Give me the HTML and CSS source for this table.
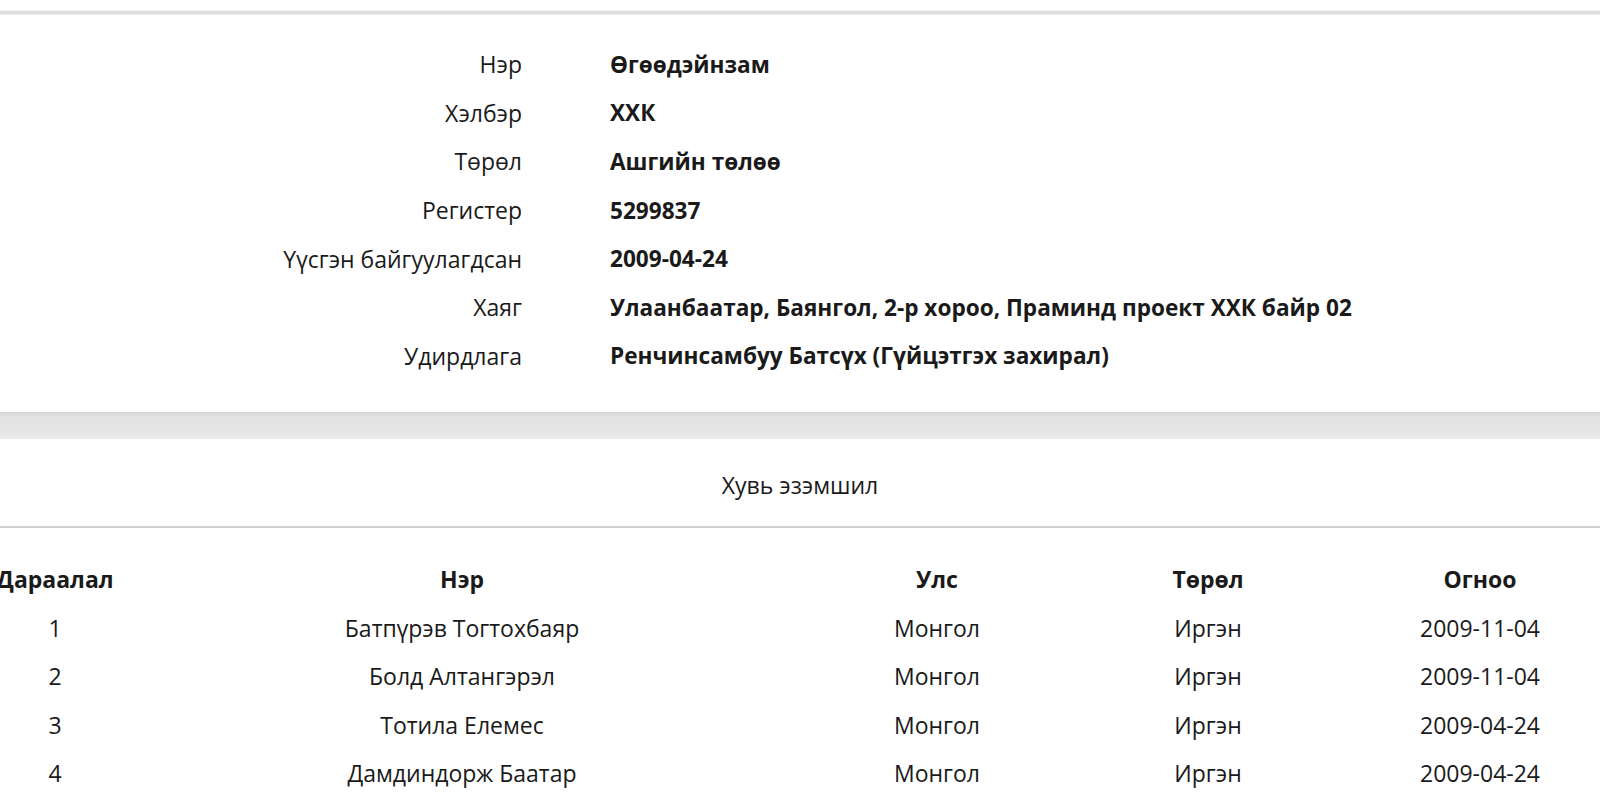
FILE: index.html
```html
<!DOCTYPE html>
<html lang="mn">
<head>
  <meta charset="UTF-8" />
  <title>Компанийн мэдээлэл</title>
  <link rel="stylesheet" href="styles.css">
</head>
<body>
  <div class="top-edge"></div>

  <section class="card info">
    <div class="info-row"><span class="label">Нэр</span><span class="value">Өгөөдэйнзам</span></div>
    <div class="info-row"><span class="label">Хэлбэр</span><span class="value">ХХК</span></div>
    <div class="info-row"><span class="label">Төрөл</span><span class="value">Ашгийн төлөө</span></div>
    <div class="info-row"><span class="label">Регистер</span><span class="value">5299837</span></div>
    <div class="info-row"><span class="label">Үүсгэн байгуулагдсан</span><span class="value">2009-04-24</span></div>
    <div class="info-row"><span class="label">Хаяг</span><span class="value">Улаанбаатар, Баянгол, 2-р хороо, Праминд проект ХХК байр 02</span></div>
    <div class="info-row"><span class="label">Удирдлага</span><span class="value">Ренчинсамбуу Батсүх (Гүйцэтгэх захирал)</span></div>
  </section>

  <div class="band"></div>

  <section class="card owners">
    <h2 class="card-title">Хувь эзэмшил</h2>
    <div class="owners-table">
      <div class="tr th">
        <span>Дараалал</span><span>Нэр</span><span>Улс</span><span>Төрөл</span><span>Огноо</span>
      </div>
      <div class="tr">
        <span>1</span><span>Батпүрэв Тогтохбаяр</span><span>Монгол</span><span>Иргэн</span><span>2009-11-04</span>
      </div>
      <div class="tr">
        <span>2</span><span>Болд Алтангэрэл</span><span>Монгол</span><span>Иргэн</span><span>2009-11-04</span>
      </div>
      <div class="tr">
        <span>3</span><span>Тотила Елемес</span><span>Монгол</span><span>Иргэн</span><span>2009-04-24</span>
      </div>
      <div class="tr">
        <span>4</span><span>Дамдиндорж Баатар</span><span>Монгол</span><span>Иргэн</span><span>2009-04-24</span>
      </div>
    </div>
  </section>
</body>
</html>
```
FILE: styles.css
```css
body {
  margin: 0;
  background: #fff;
  font-family: "Open Sans", "Noto Sans", sans-serif;
  font-size: 23px;
  color: #1a1a1a;
  overflow: hidden;
  width: 1600px;
  height: 805px;
}
.top-edge {
  height: 15px;
  background: linear-gradient(#fff 0, #fff 10px, #e4e4e4 11px, #dcdcdc 13px, #f0f0f0 15px);
}
.card {
  background: #fff;
}
.info {
  padding: 25px 0 32px;
}
.info-row {
  display: grid;
  grid-template-columns: 522px 1fr;
  column-gap: 88px;
  height: 48.6px;
  align-items: center;
}
.label {
  text-align: right;
}
.value {
  font-weight: 700;
  font-size: 22.6px;
}
.band {
  height: 27px;
  background: linear-gradient(#d4d4d4 0, #e2e2e2 4px, #e6e6e6 20px, #ececec 27px);
}
.card-title {
  margin: 0;
  height: 89px;
  display: flex;
  align-items: center;
  justify-content: center;
  padding-top: 4px;
  box-sizing: border-box;
  font-size: 23px;
  font-weight: 400;
  border-bottom: 2px solid #d2d2d2;
}
.owners-table {
  margin-left: -10px;
  padding-top: 27px;
}
.tr {
  display: grid;
  grid-template-columns: 130px 684px 266px 276px 268px;
  height: 48.5px;
  align-items: center;
  text-align: center;
}
.th {
  font-weight: 700;
}
```
